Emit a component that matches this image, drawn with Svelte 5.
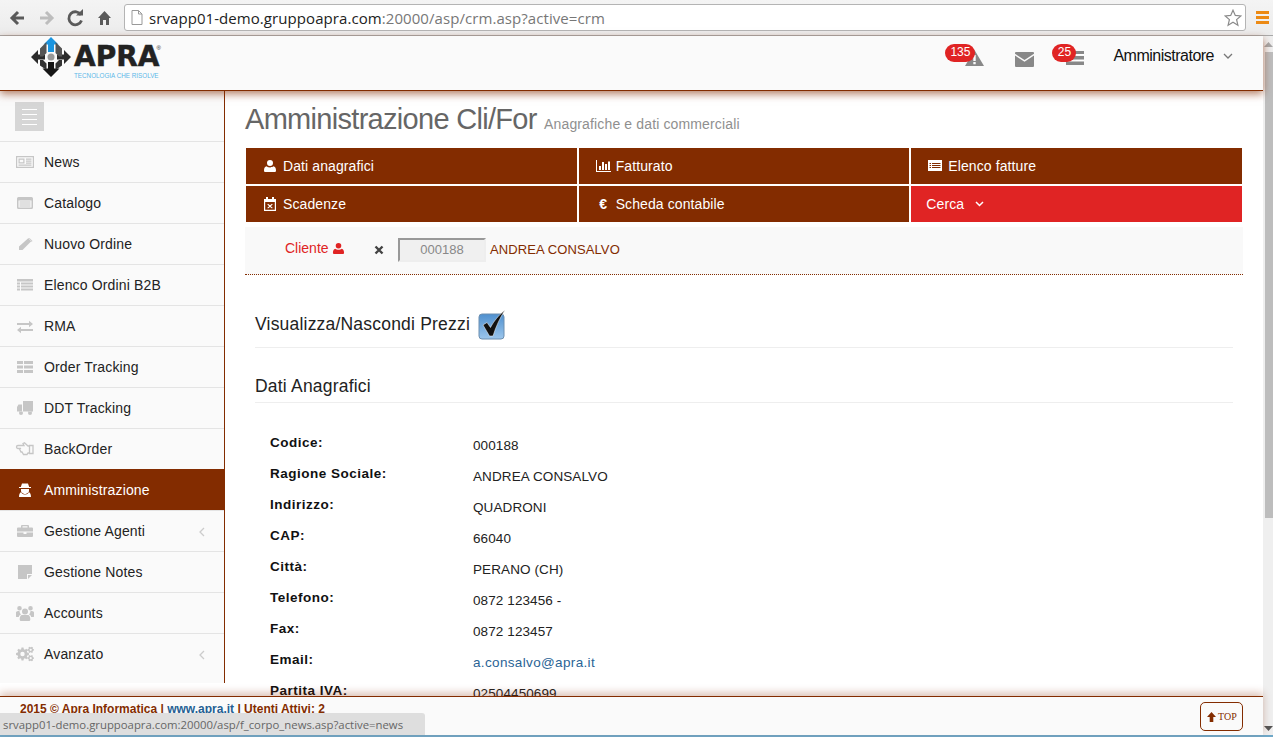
<script>
	// cog outline with a round hole, used by the "Avanzato" icon
	const gear = (cx, cy, r, hole, teeth) => {
		const pts = [];
		const step = (Math.PI * 2) / teeth;
		for (let i = 0; i < teeth; i++) {
			const a = i * step;
			[[-0.3, r * 0.76], [-0.16, r], [0.16, r], [0.3, r * 0.76]].forEach(([o, rad]) => {
				const t = a + o * step * 1.2;
				pts.push(`${(cx + Math.cos(t) * rad).toFixed(2)} ${(cy + Math.sin(t) * rad).toFixed(2)}`);
			});
		}
		const h = `M${cx - hole} ${cy}a${hole} ${hole} 0 1 0 ${hole * 2} 0a${hole} ${hole} 0 1 0 ${-hole * 2} 0z`;
		return `M${pts.join('L')}z${h}`;
	};

	const menu = [
		{ label: 'News', d: 'M0 1h18v12H0zM1.200 2.200v9.600h15.600V2.200zM2.500 3.500h6v5h-6zM3.700 4.700v2.600h3.600V4.700zM10 3.500h5.500v1.200H10zM10 5.500h5.500v1.200H10zM10 7.500h5.500v1.200H10zM2.500 9.600h13v1.200h-13z' },
		{ label: 'Catalogo', d: 'M2.500 1h13A1.500 1.500 0 0 1 17 2.500v9a1.500 1.500 0 0 1-1.500 1.500h-13A1.500 1.500 0 0 1 1 11.500v-9A1.500 1.500 0 0 1 2.500 1zM2.500 4.500v7h13v-7zM3.500 5.500h11v1h-11zM3.500 7.500h11v1h-11zM3.500 9.500h11v1h-11z' },
		{ label: 'Nuovo Ordine', d: 'M12.500 1l3 3L6.500 13H3v-3.500zM13.500 1l3 3-.8.8-3-3z' },
		{ label: 'Elenco Ordini B2B', d: 'M1 1h16v2.500H1zM1 4.500h3v2H1zM5 4.500h12v2H5zM1 7.500h3v2H1zM5 7.500h12v2H5zM1 10.500h3v2H1zM5 10.500h12v2H5z' },
		{ label: 'RMA', d: 'M1 4h12V1.800L17 5l-4 3.200V6H1zM17 8v2H5v-2.200L1 11l4 3.200V12h12z' },
		{ label: 'Order Tracking', d: 'M1 1h6v3H1zM8 1h9v3H8zM1 5.500h6v3H1zM8 5.500h9v3H8zM1 10h6v3H1zM8 10h9v3H8z' },
		{ label: 'DDT Tracking', d: 'M7 0h10v10.500H7zM2.500 3.500H6v7H1V6zM3 12a2 2 0 1 0 4 0 2 2 0 0 0-4 0zM12 12a2 2 0 1 0 4 0 2 2 0 0 0-4 0z' },
		{ label: 'BackOrder', outline: true, d: 'M2 3.500H8L7 1.500 8.500.8 12 4h1.500v7H12l-1 1.500H7.500L6 10H5L3.500 7 5 6.500H2a1.500 1.500 0 0 1 0-3zM13.500 3.500H17V11.500h-3.500z' },
		{ label: 'Amministrazione', d: 'M6 .5h6l1.200 3.500H15V5H3V4h1.800zM5 6h8v1.500a4 4 0 0 1-8 0zM3 14c0-3 1-4.500 2.500-5C6.500 10.500 8 11 9 11s2.500-.5 3.500-2c1.500.5 2.500 2 2.500 5z', active: true },
		{ label: 'Gestione Agenti', d: 'M6 1h6a1 1 0 0 1 1 1v1.500h3a1 1 0 0 1 1 1V7.500H1V4.500a1 1 0 0 1 1-1h3V2a1 1 0 0 1 1-1zM6.500 2.200v1.300h5V2.200zM1 8.500h6.500v1.500h3V8.500H17V12a1 1 0 0 1-1 1H2a1 1 0 0 1-1-1z', arrow: true },
		{ label: 'Gestione Notes', d: 'M2 0h14v9h-5v5H2zM12 10v4l4-4z' },
		{ label: 'Accounts', solid: true, d: 'M9 2.500a3 3 0 1 1 0 6 3 3 0 0 1 0-6zM3.500 0a2.300 2.300 0 1 1 0 4.600 2.300 2.300 0 0 1 0-4.600zM14.500 0a2.300 2.300 0 1 1 0 4.600 2.300 2.300 0 0 1 0-4.600zM0 6.500C0 5.500 1 5 3.500 5c.1 1.200.5 2.500 1.500 3.500C3.500 9 3 10 2.800 11H.8C0 11 0 10.500 0 10zM18 6.500c0-1-1-1.500-3.500-1.500-.1 1.200-.5 2.500-1.500 3.500 1.500.5 2 1.500 2.200 2.500h2c.8 0 .8-.5.800-1zM5.500 9h7c1.300.5 1.800 2.500 1.800 4.500 0 .8-.5 1.500-1.300 1.500H5c-.8 0-1.300-.7-1.300-1.500 0-2 .5-4 1.800-4.500z' },
		{ label: 'Avanzato', d: gear(6.500, 7, 6.500, 2.200, 8) + gear(14.700, 2.800, 3.300, 1.100, 6) + gear(14.700, 11.200, 3.300, 1.100, 6), arrow: true }
	];

	const tabs = [
		{ label: 'Dati anagrafici', d: 'M7 1a3 3 0 1 1 0 6 3 3 0 0 1 0-6zM3.500 7.200C4.500 8 5.500 8.400 7 8.400s2.500-.4 3.500-1.200c1.500.2 2.500 1.800 2.500 4.300 0 1-.6 1.500-1.500 1.500h-9C1.600 13 1 12.500 1 11.500c0-2.500 1-4.100 2.500-4.300z' },
		{ label: 'Fatturato', d: 'M0 1h1v11h15v1H0zM3 7h2v4H3zM6 3h2v8H6zM9 5h2v6H9zM12 2.500h2V11h-2z' },
		{ label: 'Elenco fatture', d: 'M0 1h14v11H0zM1.500 4v1h1.500V4zM4 4v1h8.500V4zM1.500 6v1h1.500V6zM4 6v1h8.500V6zM1.500 8v1h1.500V8zM4 8v1h8.500V8z' },
		{ label: 'Scadenze', d: 'M3 0h2v2h4V0h2v2h2v12H1V2h2zM2.200 5v7.800h9.600V5zM5 6.800l2 1.400 2-1.400.7.800L7.800 9.200l1.900 1.500-.7.800-2-1.500-2 1.500-.7-.8 1.900-1.500-1.900-1.600z' },
		{ label: 'Scheda contabile', euro: true }
	];

	const fields = [
		['Codice:', '000188'],
		['Ragione Sociale:', 'ANDREA CONSALVO'],
		['Indirizzo:', 'QUADRONI'],
		['CAP:', '66040'],
		['Città:', 'PERANO (CH)'],
		['Telefono:', '0872 123456 -'],
		['Fax:', '0872 123457'],
		['Email:', 'a.consalvo@apra.it', true],
		['Partita IVA:', '02504450699']
	];
</script>

<div class="window">
	<div class="browser">
		<svg class="nav" width="112" height="24" viewBox="0 0 112 24">
			<path d="M16 12H5M10 6l-6 6 6 6" fill="none" stroke="#5a5a5a" stroke-width="3"/>
			<path d="M32 12h11M38 6l6 6-6 6" fill="none" stroke="#bdbdbd" stroke-width="3"/>
			<path d="M73 9a6.500 6.500 0 1 0 .5 5.500" fill="none" stroke="#5a5a5a" stroke-width="2.800"/>
			<path d="M68 9.500h7V3z" fill="#5a5a5a"/>
			<path d="M96.500 5L103 12h-2v7h-3v-5h-3v5h-3v-7h-2z" fill="#5a5a5a"/>
		</svg>
		<div class="address">
			<svg width="12" height="15" viewBox="0 0 12 15"><path d="M1 .5h6.500L11 4v10.500H1zM7.500.5V4H11" fill="#fff" stroke="#999"/></svg>
			<span class="url">srvapp01-demo.gruppoapra.com<span class="url-rest">:20000/asp/crm.asp?active=crm</span></span>
			<svg class="star" width="18" height="18" viewBox="0 0 18 18"><path d="M9 1.200l2.300 5.200 5.500.5-4.200 3.700 1.300 5.600L9 13.300l-4.900 2.900 1.300-5.600L1.200 6.900l5.500-.5z" fill="#fff" stroke="#8a8a8a" stroke-width="1.200"/></svg>
		</div>
		<div class="burger"><i></i><i></i><i></i></div>
	</div>

	<div class="viewport">
		<div class="app">
			<header>
				<div class="logo">
					<svg width="40" height="40" viewBox="0 0 40 40">
						<path d="M20 0l7.500 7.500H23V15h-6V7.500h-4.500z" fill="#1b95e0"/>
						<path d="M0 20l7-7v4.500h7v5H7V27z" fill="#2b2b2b"/>
						<path d="M40 20l-7-7v4.500h-7v5h7V27z" fill="#2b2b2b"/>
						<path d="M20 40l-8.500-8.500H17V25h6v6.500h5.500z" fill="#161616"/>
						<path d="M9 11.500L15.500 5V16L12 19.500H9zM31 11.500L24.500 5V16L28 19.500H31z" fill="#555"/>
						<path d="M9 28.500V23h3l3.500 3.500V33zM31 28.500V23h-3l-3.500 3.500V33z" fill="#333"/>
						<circle cx="20" cy="20" r="3.500" fill="#999"/>
					</svg>
					<div class="logo-text">
						<span class="logo-name">APRA<sup>®</sup></span>
						<span class="logo-tag">TECNOLOGIA CHE RISOLVE</span>
					</div>
				</div>
				<div class="tools">
					<div class="tool warn">
						<span class="badge">135</span>
						<svg width="19" height="16" viewBox="0 0 19 16"><path fill-rule="evenodd" d="M9.500 0L19 16H0zM8.300 5v6h2.400V5zM8.300 12v2.200h2.400V12z" fill="#888"/></svg>
					</div>
					<div class="tool mail">
						<svg width="19" height="15" viewBox="0 0 19 15"><path d="M1 0h17a1 1 0 0 1 1 1v.8L9.500 8 0 1.800V1a1 1 0 0 1 1-1zM0 3.500L9.500 9.800 19 3.500V14a1 1 0 0 1-1 1H1a1 1 0 0 1-1-1z" fill="#888"/></svg>
					</div>
					<div class="tool tasks">
						<span class="badge">25</span>
						<svg width="18" height="14" viewBox="0 0 18 14"><path d="M0 0h18v3H0zM0 5h18v3.500H0zM0 10.500h18V14H0z" fill="#888"/><path d="M10 3.500h8M10 9.500h8" stroke="#fff"/></svg>
					</div>
					<div class="user">
						Amministratore
						<svg width="10" height="6" viewBox="0 0 10 6"><path d="M1 1l4 4 4-4" fill="none" stroke="#777" stroke-width="1.300"/></svg>
					</div>
				</div>
			</header>

			<div class="body">
				<nav>
					<div class="toggle-row">
						<button class="toggle" aria-label="menu"><i></i><i></i><i></i><i></i></button>
					</div>
					<ul>
						{#each menu as item}
							<li class:active={item.active}>
								<svg width="18" height="14" viewBox="0 0 18 14">
									{#if item.outline}
										<path d={item.d} fill="none" stroke="currentColor" stroke-width="1.300"/>
									{:else}
										<path d={item.d} fill-rule={item.solid ? 'nonzero' : 'evenodd'} fill="currentColor"/>
									{/if}
								</svg>
								<span>{item.label}</span>
								{#if item.arrow}
									<svg class="arrow" width="6" height="10" viewBox="0 0 6 10"><path d="M5 1L1 5l4 4" fill="none" stroke="#ccc" stroke-width="1.300"/></svg>
								{/if}
							</li>
						{/each}
					</ul>
				</nav>

				<main>
					<h1>Amministrazione Cli/For <small>Anagrafiche e dati commerciali</small></h1>

					<div class="tabs">
						{#each tabs as tab}
							<div class="tab">
								<span class="tab-icon">
									{#if tab.euro}
										€
									{:else}
										<svg width="15" height="14" viewBox="0 0 15 14"><path d={tab.d} fill-rule="evenodd" fill="#fff"/></svg>
									{/if}
								</span>
								{tab.label}
							</div>
						{/each}
						<div class="tab search">
							Cerca
							<svg width="9" height="6" viewBox="0 0 9 6"><path d="M1 1l3.500 3.500L8 1" fill="none" stroke="#fff" stroke-width="1.500"/></svg>
						</div>
					</div>

					<div class="client">
						<span class="client-label">
							Cliente
							<svg width="13" height="13" viewBox="0 0 14 14"><path d="M7 1a3 3 0 1 1 0 6 3 3 0 0 1 0-6zM3.500 7.200C4.500 8 5.500 8.400 7 8.400s2.500-.4 3.500-1.200c1.500.2 2.500 1.800 2.500 4.300 0 1-.6 1.500-1.500 1.500h-9C1.600 13 1 12.500 1 11.500c0-2.500 1-4.100 2.500-4.300z" fill="#e02424"/></svg>
						</span>
						<svg class="clear" width="10" height="10" viewBox="0 0 10 10"><path d="M1.500 1.500l7 7M8.500 1.500l-7 7" stroke="#444" stroke-width="2.400"/></svg>
						<input value="000188" disabled />
						<span class="client-name">ANDREA CONSALVO</span>
					</div>

					<div class="section toggle-prices">
						<h3>Visualizza/Nascondi Prezzi</h3>
						<svg width="28" height="30" viewBox="0 0 28 30">
							<defs>
								<linearGradient id="box" x1="0" y1="0" x2="0" y2="1">
									<stop offset="0" stop-color="#4f90cf"/>
									<stop offset="1" stop-color="#9cc6ec"/>
								</linearGradient>
							</defs>
							<rect x="1" y="4" width="25" height="25" rx="3" fill="url(#box)" stroke="#6d8fb0"/>
							<path d="M5 15l4-2.500 3.500 5C16 11 20 6 27 0c-4.500 7-9 16-12 26h-3.500z" fill="#111" stroke="#fff" stroke-width=".5"/>
						</svg>
					</div>

					<div class="section">
						<h3>Dati Anagrafici</h3>
					</div>

					<dl>
						{#each fields as [name, value, link]}
							<dt>{name}</dt>
							<dd class:link>{value}</dd>
						{/each}
					</dl>
				</main>
			</div>

			<footer>
				<div class="credits">2015 © Apra Informatica | <a href="#top">www.apra.it</a> | Utenti Attivi: 2</div>
				<button class="top">
					<svg width="9" height="10" viewBox="0 0 9 10"><path d="M4.500 0L9 5H6.300v5H2.700V5H0z" fill="#832c00"/></svg>
					TOP
				</button>
			</footer>
		</div>

		<div class="scrollbar">
			<svg width="9" height="5" viewBox="0 0 9 5"><path d="M4.500 0L9 5H0z" fill="#a8a8a8"/></svg>
			<div class="thumb"></div>
			<svg width="9" height="5" viewBox="0 0 9 5"><path d="M4.500 5L9 0H0z" fill="#555"/></svg>
		</div>
	</div>

	<div class="taskbar"></div>
	<div class="status">srvapp01-demo.gruppoapra.com:20000/asp/f_corpo_news.asp?active=news</div>
</div>

<style>
	:global(body) {
		margin: 0;
		overflow: hidden;
		font-family: 'Liberation Sans', Arial, sans-serif;
	}

	.window {
		position: relative;
		display: flex;
		flex-direction: column;
		height: 737px;
		overflow: hidden;
		background: #fff;
	}

	.browser {
		display: flex;
		align-items: center;
		height: 35px;
		flex: none;
		padding-left: 8px;
		background: linear-gradient(#f4f4f4, #ececec);
		border-bottom: 1px solid #a9a9a9;
		box-sizing: content-box;
	}

	.nav {
		flex: none;
	}

	.address {
		display: flex;
		align-items: center;
		width: 1122px;
		height: 27px;
		margin-left: 4px;
		padding: 0 3px 0 6px;
		box-sizing: border-box;
		background: #fff;
		border: 1px solid #b4b4b4;
		border-radius: 3px;
	}

	.url {
		flex: 1;
		margin-left: 6px;
		font-family: 'Open Sans', sans-serif;
		font-size: 15px;
		letter-spacing: 0.07px;
		color: #222;
	}

	.url-rest {
		color: #777;
	}

	.burger {
		display: flex;
		flex-direction: column;
		gap: 2px;
		margin-left: 10px;
	}

	.burger i {
		display: block;
		width: 13px;
		height: 3px;
		background: #ec8a14;
	}

	.viewport {
		display: flex;
		flex: 1;
		min-height: 0;
	}

	.app {
		display: flex;
		flex-direction: column;
		flex: 1;
		min-width: 0;
	}

	header {
		position: relative;
		z-index: 2;
		display: flex;
		justify-content: space-between;
		align-items: center;
		flex: none;
		height: 54px;
		padding: 0 30px 0 31px;
		box-sizing: content-box;
		background: #fafafa;
		border-bottom: 1px solid #832c00;
		box-shadow: 0 3px 8px rgba(131, 44, 0, 0.6);
	}

	.logo {
		display: flex;
		align-items: flex-start;
		gap: 3px;
		padding-bottom: 11px;
	}

	.logo-text {
		display: flex;
		flex-direction: column;
		margin-top: 7px;
	}

	.logo-name {
		font-family: 'DejaVu Sans', sans-serif;
		font-size: 28px;
		line-height: 26px;
		font-weight: 700;
		color: #222;
		-webkit-text-stroke: 0.5px #222;
	}

	.logo-name sup {
		font-family: 'Liberation Sans', sans-serif;
		font-size: 6px;
		font-weight: 400;
		-webkit-text-stroke: 0;
		vertical-align: 16px;
		line-height: 0;
		margin-left: -3px;
	}

	.logo-tag {
		font-size: 6.3px;
		color: #5bb8e8;
		white-space: nowrap;
		margin-top: 2px;
	}

	.tools {
		display: flex;
		align-items: center;
		height: 100%;
		padding-bottom: 14px;
		box-sizing: border-box;
	}

	.tool {
		position: relative;
		display: flex;
	}

	.warn {
		margin-right: 31px;
		margin-top: 4px;
	}

	.mail {
		margin-right: 32px;
		margin-top: 6px;
	}

	.tasks {
		margin-right: 29px;
		margin-top: 4px;
	}

	.badge {
		position: absolute;
		top: -6px;
		left: -20px;
		min-width: 24px;
		padding: 0 3px;
		height: 18px;
		line-height: 17px;
		font-size: 12px;
		text-align: center;
		color: #fff;
		background: #e02424;
		border-radius: 9px;
	}

	.tasks .badge {
		top: -7px;
		left: -14px;
		min-width: 18px;
	}

	.user {
		display: flex;
		align-items: center;
		gap: 9px;
		font-size: 16px;
		letter-spacing: -0.5px;
		color: #111;
	}

	.body {
		display: flex;
		flex: 1;
		min-height: 0;
		overflow: hidden;
	}

	nav {
		flex: none;
		width: 224px;
		height: 592px;
		background: #fafafa;
		border-right: 1px solid #832c00;
	}

	.toggle-row {
		height: 50px;
		padding: 11px 0 0 15px;
		box-sizing: border-box;
	}

	.toggle {
		display: flex;
		flex-direction: column;
		justify-content: center;
		align-items: center;
		gap: 4px;
		width: 29px;
		height: 29px;
		padding: 0;
		border: none;
		background: #d6d6d6;
	}

	.toggle i {
		display: block;
		width: 15px;
		height: 1px;
		background: #fff;
	}

	ul {
		margin: 0;
		padding: 0;
		list-style: none;
	}

	li {
		display: flex;
		align-items: center;
		gap: 10px;
		height: 41px;
		padding-left: 16px;
		box-sizing: border-box;
		font-size: 14px;
		letter-spacing: 0.15px;
		color: #222;
		border-top: 1px solid #e4e4e4;
	}

	li svg {
		flex: none;
		overflow: visible;
		color: #c6c6c6;
	}

	li span {
		flex: 1;
	}

	li.active {
		background: #832c00;
		color: #fff;
		border-top-color: #832c00;
	}

	li.active svg {
		color: #fff;
	}

	.arrow {
		margin-right: 19px;
		margin-top: 2px;
	}

	main {
		flex: 1;
		min-width: 0;
		padding: 0 20px 0 20px;
	}

	h1 {
		margin: 12px 0 12px;
		height: 33px;
		line-height: 33px;
		font-size: 29px;
		font-weight: 400;
		letter-spacing: -0.7px;
		color: #666;
		white-space: nowrap;
	}

	h1 small {
		font-size: 14px;
		letter-spacing: 0.14px;
		color: #8f8f8f;
	}

	.tabs {
		display: grid;
		grid-template-columns: repeat(3, 1fr);
		gap: 2px;
		margin: 0 1px;
	}

	.tab {
		display: flex;
		align-items: center;
		height: 36px;
		padding-left: 17px;
		background: #832c00;
		color: #fff;
		font-size: 14px;
		letter-spacing: 0.1px;
	}

	.tab-icon {
		display: flex;
		justify-content: center;
		width: 15px;
		margin-right: 5px;
		font-weight: 700;
	}

	.tab.search {
		padding-left: 15px;
		gap: 11px;
		background: #e02424;
	}

	.client {
		display: flex;
		align-items: center;
		height: 48px;
		margin-top: 5px;
		padding: 0 0 2px 40px;
		box-sizing: border-box;
		background: #f9f9f9;
		border-bottom: 1px dotted #832c00;
	}

	.client-label {
		display: flex;
		align-items: center;
		gap: 3px;
		font-size: 14px;
		color: #e02424;
		width: 89px;
		margin-bottom: 3px;
	}

	.clear {
		margin-right: 14px;
	}

	input {
		width: 88px;
		height: 24px;
		padding: 0;
		box-sizing: border-box;
		border: 2px solid;
		border-color: #999 #eee #eee #999;
		background: #f0f0f0;
		font-family: inherit;
		font-size: 13px;
		text-align: center;
		color: #888;
	}

	.client-name {
		margin-left: 4px;
		font-size: 13px;
		color: #832c00;
		letter-spacing: 0.1px;
	}

	.section {
		display: flex;
		align-items: center;
		margin: 0 10px;
		border-bottom: 1px solid #eee;
	}

	.toggle-prices {
		gap: 8px;
		height: 73px;
		padding-top: 27px;
		box-sizing: border-box;
	}

	.section:not(.toggle-prices) {
		height: 55px;
		padding-top: 23px;
		box-sizing: border-box;
	}

	h3 {
		margin: 0;
		font-size: 17.500px;
		font-weight: 400;
		color: #222;
		letter-spacing: 0.2px;
	}

	dl {
		display: grid;
		grid-template-columns: 203px 1fr;
		grid-auto-rows: 31px;
		margin: 32px 0 0 25px;
		font-size: 13.500px;
		color: #222;
	}

	dt {
		font-weight: 700;
		letter-spacing: 0.5px;
		color: #111;
	}

	dd {
		margin: 3px 0 0;
		letter-spacing: 0.1px;
	}

	dd.link {
		color: #2a6496;
		letter-spacing: 0.35px;
	}

	footer {
		position: relative;
		z-index: 2;
		display: flex;
		justify-content: space-between;
		align-items: flex-start;
		flex: none;
		height: 39px;
		padding: 5px 20px 0 20px;
		box-sizing: border-box;
		background: #fafafa;
		border-top: 1px solid #832c00;
		box-shadow: 0 -3px 8px rgba(131, 44, 0, 0.3);
	}

	.credits {
		font-size: 12px;
		font-weight: 700;
		color: #832c00;
	}

	.credits a {
		color: #245f93;
		text-decoration: none;
	}

	.top {
		display: flex;
		align-items: center;
		gap: 2px;
		width: 43px;
		height: 29px;
		padding: 0 0 0 6px;
		background: #fafafa;
		border: 1px solid #832c00;
		border-radius: 5px;
		font-family: 'Liberation Serif', serif;
		font-size: 10px;
		color: #832c00;
	}

	.scrollbar {
		display: flex;
		flex-direction: column;
		align-items: center;
		justify-content: space-between;
		flex: none;
		width: 10px;
		padding: 6px 0 4px;
		box-sizing: border-box;
		background: #efefef;
	}

	.thumb {
		width: 8px;
		height: 466px;
		margin: 5px 0 auto 2px;
		background: #bdbdbd;
	}

	.taskbar {
		flex: none;
		height: 2px;
		background: #6fa8c8;
	}

	.status {
		position: absolute;
		left: 0;
		bottom: 2px;
		z-index: 3;
		width: 425px;
		height: 22px;
		line-height: 23px;
		padding-left: 3px;
		box-sizing: border-box;
		background: #dedede;
		border-top-right-radius: 3px;
		font-family: 'Open Sans', sans-serif;
		font-size: 11.350px;
		color: #666;
		white-space: nowrap;
	}
</style>
